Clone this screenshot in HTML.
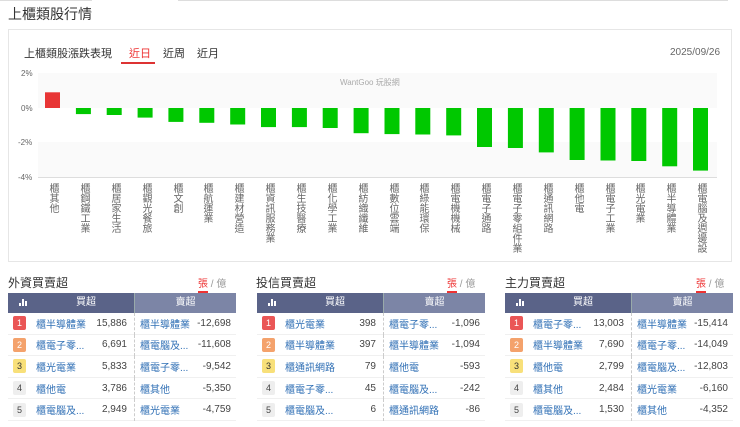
<!DOCTYPE html><html><head><meta charset="utf-8"><style>
*{margin:0;padding:0;box-sizing:border-box}
body{width:740px;height:427px;background:#fff;font-family:"Liberation Sans","Noto Sans CJK TC",sans-serif;position:relative;overflow:hidden;color:#333}
.a{position:absolute}
.vl{position:absolute;writing-mode:vertical-rl;font-size:10px;color:#666;line-height:11px;top:183px;letter-spacing:0px}
.tb{position:absolute;top:293px;width:228px;font-size:10px}
.hd{height:20px;display:flex;color:#fff}
.hd div{line-height:20px;text-align:center}
.row{height:21.6px;display:flex;align-items:center;border-bottom:1px solid #f0f0f0;position:relative}
.bd{width:13px;height:14px;margin-left:5px;font-size:9px;text-align:center;line-height:14px;border-radius:2px}
.nm{color:#2f6fb5;font-size:10px}
.nu{font-size:10px;color:#444;position:absolute;text-align:right}
.ttl{position:absolute;top:274px;font-size:12px;color:#333}
.tg{position:absolute;top:275px;font-size:10px;color:#999}
.tg b{color:#e33;font-weight:normal;border-bottom:2px solid #e33;padding-bottom:1px}
</style></head><body>
<div class="a" style="left:0;top:0;width:92px;height:1px;background:#ddd"></div>
<div class="a" style="left:178px;top:0;width:550px;height:1px;background:#ddd"></div>
<div class="a" style="left:8px;top:4px;font-size:14px;color:#333">上櫃類股行情</div>
<div class="a" style="left:8px;top:29px;width:724px;height:233px;border:1px solid #e6e6e6"></div>
<div class="a" style="left:24px;top:45px;font-size:11px;color:#333">上櫃類股漲跌表現</div>
<div class="a" style="left:129px;top:45px;font-size:11px;color:#e33">近日</div>
<div class="a" style="left:121px;top:62px;width:34px;height:2px;background:#d33"></div>
<div class="a" style="left:163px;top:45px;font-size:11px;color:#333">近周</div>
<div class="a" style="left:197px;top:45px;font-size:11px;color:#333">近月</div>
<div class="a" style="left:670px;top:47px;font-size:10px;color:#666">2025/09/26</div>
<svg class="a" style="left:0;top:0" width="740" height="260">
<rect x="38" y="73" width="679" height="35" fill="#fafafa"/>
<rect x="38" y="142" width="679" height="35" fill="#fafafa"/>
<line x1="38" y1="177.5" x2="717" y2="177.5" stroke="#ddd"/>
<g font-size="8" fill="#666" font-family="Liberation Sans"><text x="21" y="76">2%</text><text x="21" y="111">0%</text><text x="18" y="145">-2%</text><text x="18" y="180">-4%</text></g>
<text x="340" y="85" font-size="8" fill="#aaa" font-family="Liberation Sans,Noto Sans CJK TC">WantGoo 玩股網</text>
<rect x="45" y="92.3" width="15" height="15.7" fill="#e83535"/>
<g fill="#00c800">
<rect x="75.9" y="108" width="15" height="6.1"/>
<rect x="106.7" y="108" width="15" height="7"/>
<rect x="137.6" y="108" width="15" height="9.6"/>
<rect x="168.4" y="108" width="15" height="13.9"/>
<rect x="199.3" y="108" width="15" height="14.8"/>
<rect x="230.2" y="108" width="15" height="16.5"/>
<rect x="261" y="108" width="15" height="19.1"/>
<rect x="291.9" y="108" width="15" height="19.1"/>
<rect x="322.7" y="108" width="15" height="20"/>
<rect x="353.6" y="108" width="15" height="25.2"/>
<rect x="384.5" y="108" width="15" height="26.1"/>
<rect x="415.3" y="108" width="15" height="26.5"/>
<rect x="446.2" y="108" width="15" height="27.4"/>
<rect x="477" y="108" width="15" height="39"/>
<rect x="507.9" y="108" width="15" height="40"/>
<rect x="538.8" y="108" width="15" height="44.4"/>
<rect x="569.6" y="108" width="15" height="52"/>
<rect x="600.5" y="108" width="15" height="52.5"/>
<rect x="631.3" y="108" width="15" height="53"/>
<rect x="662.2" y="108" width="15" height="58.3"/>
<rect x="693" y="108" width="15" height="62.6"/>
</g></svg>
<div class="vl" style="left:47px">櫃其他</div>
<div class="vl" style="left:78px">櫃鋼鐵工業</div>
<div class="vl" style="left:109px">櫃居家生活</div>
<div class="vl" style="left:140px">櫃觀光餐旅</div>
<div class="vl" style="left:171px">櫃文創</div>
<div class="vl" style="left:201px">櫃航運業</div>
<div class="vl" style="left:232px">櫃建材營造</div>
<div class="vl" style="left:263px">櫃資訊服務業</div>
<div class="vl" style="left:294px">櫃生技醫療</div>
<div class="vl" style="left:325px">櫃化學工業</div>
<div class="vl" style="left:356px">櫃紡織纖維</div>
<div class="vl" style="left:387px">櫃數位雲端</div>
<div class="vl" style="left:417px">櫃綠能環保</div>
<div class="vl" style="left:448px">櫃電機機械</div>
<div class="vl" style="left:479px">櫃電子通路</div>
<div class="vl" style="left:510px">櫃電子零組件業</div>
<div class="vl" style="left:541px">櫃通訊網路</div>
<div class="vl" style="left:572px">櫃他電</div>
<div class="vl" style="left:603px">櫃電子工業</div>
<div class="vl" style="left:633px">櫃光電業</div>
<div class="vl" style="left:664px">櫃半導體業</div>
<div class="vl" style="left:695px">櫃電腦及週邊設</div>

<div class="ttl" style="left:8px">外資買賣超</div><div class="tg" style="left:198px"><b>張</b> / 億</div>
<div class="ttl" style="left:256px">投信買賣超</div><div class="tg" style="left:447px"><b>張</b> / 億</div>
<div class="ttl" style="left:505px">主力買賣超</div><div class="tg" style="left:696px"><b>張</b> / 億</div>

<div id="t1" class="tb" style="left:8px"></div>
<div id="t2" class="tb" style="left:257px"></div>
<div id="t3" class="tb" style="left:505px"></div>
<script>
var D=[[["櫃半導體業","15,886","櫃半導體業","-12,698"],["櫃電子零...","6,691","櫃電腦及...","-11,608"],["櫃光電業","5,833","櫃電子零...","-9,542"],["櫃他電","3,786","櫃其他","-5,350"],["櫃電腦及...","2,949","櫃光電業","-4,759"]],
[["櫃光電業","398","櫃電子零...","-1,096"],["櫃半導體業","397","櫃半導體業","-1,094"],["櫃通訊網路","79","櫃他電","-593"],["櫃電子零...","45","櫃電腦及...","-242"],["櫃電腦及...","6","櫃通訊網路","-86"]],
[["櫃電子零...","13,003","櫃半導體業","-15,414"],["櫃半導體業","7,690","櫃電子零...","-14,049"],["櫃他電","2,799","櫃電腦及...","-12,803"],["櫃其他","2,484","櫃光電業","-6,160"],["櫃電腦及...","1,530","櫃其他","-4,352"]]];
var C=[["#ea5656","#fff"],["#f4a26c","#fff"],["#f8e07a","#333"],["#eee","#444"],["#eee","#444"]];
var ic='<svg width="8" height="8" style="vertical-align:middle"><rect x="0" y="5" width="2" height="3" fill="#fff"/><rect x="3" y="1" width="2" height="7" fill="#fff"/><rect x="6" y="3" width="2" height="5" fill="#fff"/></svg>';
for(var t=0;t<3;t++){var h='<div class="hd"><div style="width:30px;background:#5a6388">'+ic+'</div><div style="width:96px;background:#5a6388">買超</div><div style="width:102px;background:#7c85a6;border-left:1px solid #9aa">賣超</div></div>';
for(var i=0;i<5;i++){var r=D[t][i];h+='<div class="row"><div class="bd" style="background:'+C[i][0]+';color:'+C[i][1]+'">'+(i+1)+'</div><span class="nm a" style="left:28px">'+r[0]+'</span><span class="nu" style="right:109px">'+r[1]+'</span><div class="a" style="left:126px;top:0;bottom:-1px;border-left:1px dashed #ccc"></div><span class="nm a" style="left:132px">'+r[2]+'</span><span class="nu" style="right:5px">'+r[3]+'</span></div>';}
document.getElementById('t'+(t+1)).innerHTML=h;}
</script>
</body></html>
